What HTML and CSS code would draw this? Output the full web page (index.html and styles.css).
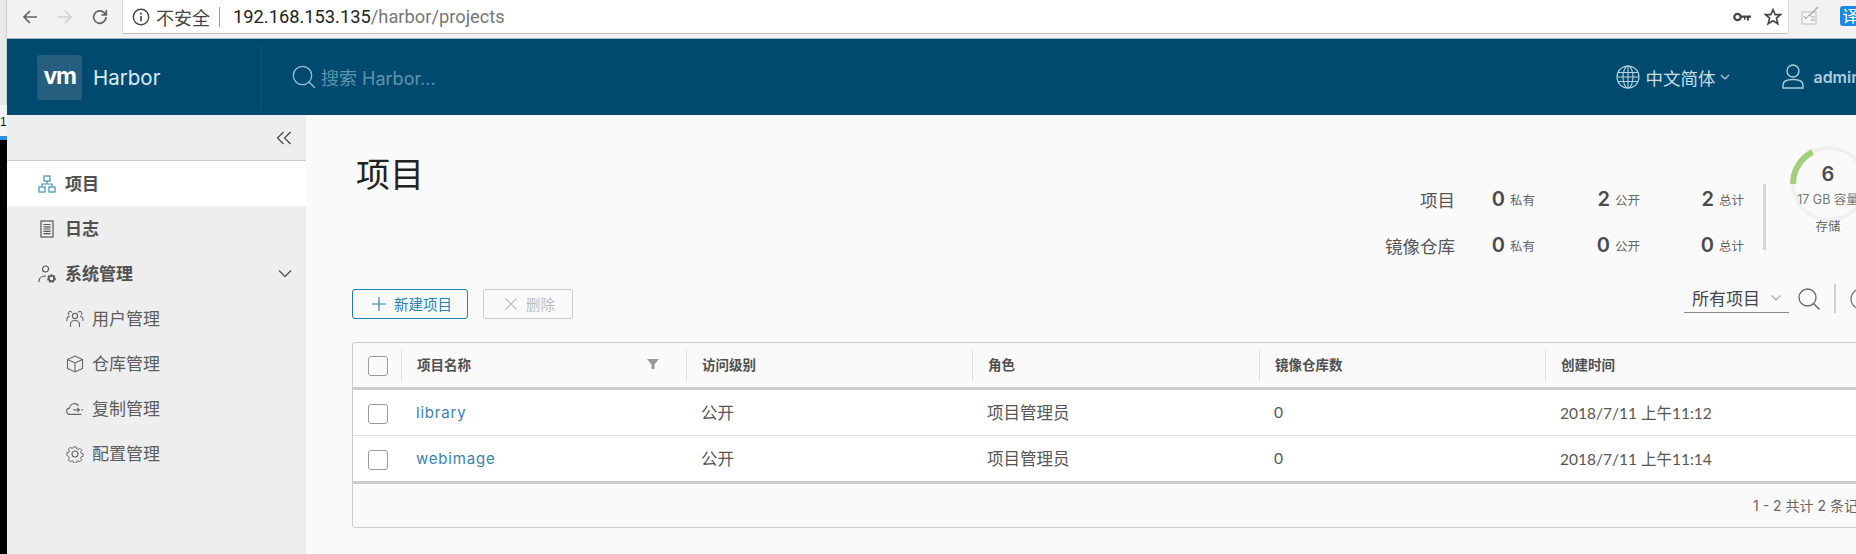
FILE: index.html
```html
<!DOCTYPE html>
<html lang="zh-CN">
<head>
<meta charset="utf-8">
<title>Harbor</title>
<link rel="stylesheet" href="styles.css">
</head>
<body>
<div class="strip">
  <div class="strip-gray"></div>
  <div class="strip-white">1</div>
  <div class="strip-blue"></div>
  <div class="strip-black"></div>
</div>
<div class="window">
  <div class="chrome">
    <div class="nav">
      <svg class="nav-ic" viewBox="0 0 18 18"><path d="M16 9H3M9 3L3 9l6 6" fill="none" stroke="#5f6368" stroke-width="1.7"/></svg>
      <svg class="nav-ic" viewBox="0 0 18 18"><path d="M2 9h13M9 3l6 6-6 6" fill="none" stroke="#cfcfcf" stroke-width="1.7"/></svg>
      <svg class="nav-ic" viewBox="0 0 18 18"><path d="M15 9a6.2 6.2 0 1 1-1.9-4.4L15 6.5M15.3 2v4.8h-4.8" fill="none" stroke="#5f6368" stroke-width="1.7"/></svg>
    </div>
    <div class="omnibox">
      <svg class="info-ic" viewBox="0 0 18 18"><circle cx="9" cy="9" r="7.7" fill="none" stroke="#444" stroke-width="1.4"/><path d="M9 8v5.2M9 4.6v1.8" stroke="#444" stroke-width="1.6"/></svg>
      <span class="insecure">不安全</span>
      <span class="omni-sep"></span>
      <span class="url"><span class="url-host">192.168.153.135</span>/harbor/projects</span>
      <svg class="key-ic" viewBox="0 0 18 10"><circle cx="4.5" cy="5" r="3.2" fill="none" stroke="#444" stroke-width="2.2"/><path d="M8 3.6h10v2.2h-2v2.6h-2V5.8h-1.5v2H11V5.8H8z" fill="#444"/></svg>
      <svg class="star-ic" viewBox="0 0 18 18"><path d="M9 1.6l2.2 5h5.4l-4.2 3.5 1.5 5.6L9 12.7l-4.9 3 1.5-5.6L1.4 6.6h5.4z" fill="none" stroke="#444" stroke-width="1.6"/></svg>
    </div>
    <svg class="ext-ic" viewBox="0 0 19 19"><rect x="1" y="6" width="14" height="12" fill="#f6f6f6" stroke="#bdbdbd"/><path d="M3 10l2 3 3-4M10 11h4M10 14h4" fill="none" stroke="#9a9a9a"/><path d="M8 10l9-9" stroke="#a8a8a8" stroke-width="1.5"/></svg>
    <span class="ext-badge">译</span>
  </div>

  <header class="topbar">
    <div class="brand">
      <span class="logo">vm</span>
      <span class="brand-name">Harbor</span>
    </div>
    <div class="global-search">
      <svg class="search-ic" viewBox="0 0 24 24"><circle cx="10.5" cy="10.5" r="9.2" fill="none" stroke="#9cc0d3" stroke-width="1.3"/><path d="M17 17l6 6" stroke="#9cc0d3" stroke-width="1.3"/></svg>
      <span class="search-ph">搜索 Harbor...</span>
    </div>
    <div class="lang">
      <svg class="globe-ic" viewBox="0 0 24 24"><g fill="none" stroke="#b9d4e2" stroke-width="1.1"><circle cx="12" cy="12" r="11"/><ellipse cx="12" cy="12" rx="5" ry="11"/><path d="M12 1v22M2 7.5h20M1 12h22M2 16.5h20"/></g></svg>
      <span>中文简体</span>
      <svg class="lang-chev" viewBox="0 0 12 8"><path d="M2 2l4 4 4-4" fill="none" stroke="#b9d4e2" stroke-width="1.1"/></svg>
    </div>
    <div class="user">
      <svg class="user-ic" viewBox="0 0 22 26"><g fill="none" stroke="#a9cfe0" stroke-width="1.4"><circle cx="11" cy="7" r="6"/><path d="M1 24v-3c0-3.5 4-5.5 10-5.5s10 2 10 5.5v3z"/></g></svg>
      <span>admin</span>
    </div>
  </header>

  <div class="layout">
    <nav class="sidebar">
      <div class="collapse">
        <svg class="collapse-ic" viewBox="0 0 16 14"><path d="M7.5 1L1.5 7l6 6M14.5 1l-6 6 6 6" fill="none" stroke="#444" stroke-width="1.2"/></svg>
      </div>
      <a class="item active">
        <svg class="item-ic" viewBox="0 0 18 18"><g fill="none" stroke="#3f90bc" stroke-width="1.2"><rect x="6" y="1" width="6" height="5"/><rect x="1" y="12" width="6" height="5"/><rect x="11" y="12" width="6" height="5"/><path d="M9 6v3M4 12V9h10v3"/></g></svg>
        <span>项目</span>
      </a>
      <a class="item">
        <svg class="item-ic" viewBox="0 0 18 18"><g fill="none" stroke="#555" stroke-width="1.2"><rect x="3" y="1" width="12" height="16"/><path d="M5.5 4.5h7M5.5 6.8h7M5.5 9h7M5.5 11.3h7M5.5 13.6h7"/></g></svg>
        <span>日志</span>
      </a>
      <a class="item">
        <svg class="item-ic" viewBox="0 0 18 18"><g fill="none" stroke="#555" stroke-width="1.2"><circle cx="7.5" cy="4" r="3"/><path d="M1 17v-1c0-3 3-5 7-5"/></g><circle cx="13.5" cy="13.5" r="3.2" fill="none" stroke="#555" stroke-width="2.2" stroke-dasharray="1.8 0.9"/><circle cx="13.5" cy="13.5" r="2.6" fill="none" stroke="#555" stroke-width="1.4"/></svg>
        <span>系统管理</span>
        <svg class="item-chev" viewBox="0 0 14 9"><path d="M1 1.5l6 6 6-6" fill="none" stroke="#555" stroke-width="1.3"/></svg>
      </a>
      <a class="item sub">
        <svg class="item-ic" viewBox="0 0 18 18"><g fill="none" stroke="#666" stroke-width="1.1"><circle cx="9" cy="6" r="2.6"/><path d="M4.5 17v-3c0-2 2-3.5 4.5-3.5s4.5 1.5 4.5 3.5v3M1 11V9c0-1.500 1-2.500 3-2.800M17 11V9c0-1.500-1-2.500-3-2.800M3 5a2 2 0 1 1 3-2.500M15 5a2 2 0 1 0-3-2.500"/></g></svg>
        <span>用户管理</span>
      </a>
      <a class="item sub">
        <svg class="item-ic" viewBox="0 0 18 18"><g fill="none" stroke="#666" stroke-width="1.1"><path d="M9 1l7.500 3.500v9L9 17l-7.500-3.500v-9z"/><path d="M1.500 4.500L9 8l7.500-3.500M9 8v9"/></g></svg>
        <span>仓库管理</span>
      </a>
      <a class="item sub">
        <svg class="item-ic" viewBox="0 0 20 18"><g fill="none" stroke="#666" stroke-width="1.2"><path d="M17 15H4.500a3.500 3.500 0 0 1-.5-7A5.500 5.500 0 0 1 14 5.500"/><path d="M8 10h7M12.500 7.800L15 10l-2.500 2.200"/><path d="M18 9v2"/></g></svg>
        <span>复制管理</span>
      </a>
      <a class="item sub">
        <svg class="item-ic" viewBox="0 0 18 18"><g fill="none" stroke="#666" stroke-width="1.1"><circle cx="9" cy="9" r="3"/><path d="M7.600 1h2.800l.5 2.300 1.500.7 2-1.200 2 2-1.200 2 .7 1.500 2.100.5v2.800l-2.100.5-.7 1.500 1.200 2-2 2-2-1.200-1.500.7-.5 2.100H7.600l-.5-2.100-1.500-.7-2 1.200-2-2 1.200-2-.7-1.500L0 10.400V7.600l2.100-.5.7-1.500-1.200-2 2-2 2 1.200 1.500-.7z" transform="translate(0.900 0.900) scale(0.9)"/></g></svg>
        <span>配置管理</span>
      </a>
    </nav>

    <main class="main">
      <div class="title-row">
        <h1 class="title">项目</h1>
        <div class="summary">
          <div class="stats">
            <span class="stat-label">项目</span>
            <span class="stat"><b>0</b><small>私有</small></span>
            <span class="stat"><b>2</b><small>公开</small></span>
            <span class="stat"><b>2</b><small>总计</small></span>
            <span class="stat-label">镜像仓库</span>
            <span class="stat"><b>0</b><small>私有</small></span>
            <span class="stat"><b>0</b><small>公开</small></span>
            <span class="stat"><b>0</b><small>总计</small></span>
          </div>
          <div class="summary-sep"></div>
          <div class="gauge">
            <svg class="gauge-ring" viewBox="0 0 90 90"><circle cx="39" cy="39" r="36" fill="none" stroke="#f0f0f0" stroke-width="4"/><path d="M3 39A36 36 0 0 1 22.500 7" fill="none" stroke="#a3cf7a" stroke-width="6"/></svg>
            <div class="gauge-num">6</div>
            <div class="gauge-cap">17 GB 容量</div>
            <div class="gauge-name">存储</div>
          </div>
        </div>
      </div>

      <div class="toolbar">
        <button class="btn primary">
          <svg class="btn-ic" viewBox="0 0 14 14"><path d="M7 0v14M0 7h14" stroke="#2d7fae" stroke-width="1.2"/></svg>
          <span>新建项目</span>
        </button>
        <button class="btn disabled">
          <svg class="btn-ic small" viewBox="0 0 12 12"><path d="M.5.5l11 11M11.500.5l-11 11" stroke="#bdbdbd" stroke-width="1.2"/></svg>
          <span>删除</span>
        </button>
        <div class="tools">
          <div class="select">
            <span>所有项目</span>
            <svg class="select-chev" viewBox="0 0 12 8"><path d="M1.500 1.500L6 6l4.500-4.500" fill="none" stroke="#aaa" stroke-width="1.2"/></svg>
          </div>
          <svg class="tool-search" viewBox="0 0 22 22"><circle cx="9.500" cy="9.500" r="8.500" fill="none" stroke="#666" stroke-width="1.300"/><path d="M15.500 15.500l6 6" stroke="#666" stroke-width="1.500"/></svg>
          <span class="tool-sep"></span>
          <svg class="tool-refresh" viewBox="0 0 22 22"><circle cx="11" cy="11" r="10" fill="none" stroke="#777" stroke-width="1.300"/></svg>
        </div>
      </div>

      <div class="table">
        <div class="row head">
          <div class="cell check"><span class="box"></span></div>
          <div class="cell"><span class="th name-th">项目名称<svg class="filter-ic" viewBox="0 0 12 12"><path d="M0 1h12L7.500 6.500V11h-3V6.500z" fill="#9a9a9a"/></svg></span></div>
          <div class="cell"><span class="th">访问级别</span></div>
          <div class="cell"><span class="th">角色</span></div>
          <div class="cell"><span class="th">镜像仓库数</span></div>
          <div class="cell"><span class="th">创建时间</span></div>
        </div>
        <div class="row body-row">
          <div class="cell check"><span class="box"></span></div>
          <div class="cell"><a class="link">library</a></div>
          <div class="cell">公开</div>
          <div class="cell">项目管理员</div>
          <div class="cell num">0</div>
          <div class="cell num">2018/7/11 上午11:12</div>
        </div>
        <div class="row body-row last">
          <div class="cell check"><span class="box"></span></div>
          <div class="cell"><a class="link">webimage</a></div>
          <div class="cell">公开</div>
          <div class="cell">项目管理员</div>
          <div class="cell num">0</div>
          <div class="cell num">2018/7/11 上午11:14</div>
        </div>
        <div class="table-foot">1 - 2 共计 2 条记录</div>
      </div>
    </main>
  </div>
</div>
</body>
</html>
```
FILE: styles.css
```css
* { box-sizing: border-box; }
html, body { margin: 0; height: 554px; overflow: hidden; }
body {
  display: flex;
  width: 1856px;
  font-family: "Inter", "Noto Sans CJK SC", sans-serif;
  color: #565656;
  background: #fafafa;
}
svg { display: block; flex: none; }

/* left desktop sliver */
.strip { flex: none; width: 7px; display: flex; flex-direction: column; background: #000; }
.strip-gray { height: 105px; background: #e9e9e9; border-right: 1px solid #cfcfcf; }
.strip-white { height: 31px; background: #f4f4f4; font: 12px/34px "Liberation Sans", sans-serif; color: #222; overflow: hidden; }
.strip-blue { height: 4px; background: #2f8fe0; }
.strip-black { flex: 1; background: #000; }

/* window is wider than the photographed area */
.window { flex: none; width: 1873px; display: flex; flex-direction: column; height: 554px; }

/* browser chrome */
.chrome { height: 39px; flex: none; display: flex; align-items: flex-start; background: #f2f2f2; border-bottom: 1px solid #9fb8c6; }
.nav { width: 115px; flex: none; height: 33px; display: flex; align-items: center; gap: 17px; padding-left: 14px; }
.nav-ic { width: 18px; height: 18px; }
.omnibox {
  width: 1667px; height: 34px; flex: none; display: flex; align-items: center;
  background: #fff; border: 1px solid #ddd; border-top: 0; border-bottom-color: #c9c0c0; border-radius: 0 0 3px 0;
  padding-left: 9px;
}
.info-ic { width: 18px; height: 18px; }
.insecure { margin-left: 6px; font-size: 18px; color: #444; }
.omni-sep { width: 1px; height: 20px; background: #999; margin-left: 9px; }
.url { margin-left: 13px; font: 18.300px "Roboto", sans-serif; color: #777; }
.url-host { color: #222; }
.key-ic { width: 18px; height: 10px; margin-left: auto; }
.star-ic { width: 18px; height: 18px; margin: 0 6px 0 13px; }
.ext-ic { width: 19px; height: 19px; margin: 6px 0 0 12px; }
.ext-badge {
  margin: 6px 0 0 20px; width: 21px; height: 20px; border-radius: 3px; background: #1e88e5; color: #fff;
  font-size: 16px; line-height: 20px; text-align: center; flex: none;
}

/* app header */
.topbar { height: 76px; flex: none; display: flex; align-items: center; background: #004a70; color: #c9dfea; }
.brand { width: 255px; height: 66px; flex: none; display: flex; align-items: center; padding-left: 30px; border-right: 1px solid #0d5478; }
.logo {
  width: 45px; height: 45px; flex: none; border-radius: 3px; background: #255e7f; color: #fff;
  font-size: 23px; font-weight: 700; letter-spacing: -1.5px; line-height: 42px; text-align: center;
}
.brand-name { margin-left: 11px; font-size: 20.500px; color: #d9eef8; }
.global-search { display: flex; align-items: center; margin-left: 30px; }
.search-ic { width: 24px; height: 24px; }
.search-ph { margin-left: 5px; font-size: 18px; color: #5f93ad; }
.lang { margin-left: auto; display: flex; align-items: center; font-size: 17.500px; }
.globe-ic { width: 24px; height: 24px; margin-right: 5px; }
.lang-chev { width: 12px; height: 8px; margin-left: 4px; }
.user { display: flex; align-items: center; margin: 0 19px 0 51px; font-size: 16px; font-weight: 600; color: #a9cfe0; }
.user-ic { width: 22px; height: 26px; margin-right: 9px; }

/* layout */
.layout { flex: 1; display: flex; min-height: 0; }
.sidebar { width: 299px; flex: none; background: #eee; font-size: 17px; }
.collapse { height: 46px; display: flex; align-items: center; justify-content: flex-end; padding: 0 14px 0 0; border-bottom: 1px solid #ccc; }
.collapse-ic { width: 16px; height: 14px; }
.item { height: 45px; display: flex; align-items: center; padding-left: 31px; font-weight: 700; color: #505050; }
.item span { padding-bottom: 2px; }
.item.active { background: #fff; }
.item-ic { width: 18px; height: 18px; margin-right: 9px; }
.item-chev { width: 14px; height: 9px; margin-left: auto; margin-right: 14px; }
.item.sub { padding-left: 59px; font-weight: 400; color: #5c5c5c; }
.item.sub .item-ic { margin-right: 8px; }

.main { flex: 1; min-width: 0; padding-left: 46px; background: #fafafa; }
.title-row { height: 169px; display: flex; align-items: flex-start; }
.title { margin: 39px 0 0 4px; font-size: 34px; line-height: 42px; font-weight: 400; color: #222; }
.summary { margin-left: auto; display: flex; align-items: flex-start; padding-top: 30px; }
.stats { display: grid; grid-template-columns: auto 80px 105px 104px; grid-auto-rows: 46px; margin-top: 31px; align-items: center; }
.stat-label { font-size: 17.500px; text-align: right; color: #565656; }
.stat { display: flex; align-items: center; justify-content: flex-end; gap: 5px; }
.stat b { font-size: 20px; font-weight: 600; color: #4a4a4a; }
.stat small { font-size: 12.500px; color: #666; }
.summary-sep { width: 3px; height: 66px; margin: 39px 0 0 19px; background: #d6d6d6; }
.gauge { position: relative; width: 90px; margin-left: 24px; text-align: center; padding-right: 14px; }
.gauge-ring { position: absolute; top: 0; left: 0; width: 90px; height: 90px; }
.gauge-num { padding-top: 17px; font-size: 20px; line-height: 24px; font-weight: 600; color: #4a4a4a; position: relative; }
.gauge-cap { margin-top: 4px; font-size: 12.500px; line-height: 20px; white-space: nowrap; color: #777; position: relative; }
.gauge-name { margin-top: 7px; font-size: 12.500px; line-height: 20px; color: #666; position: relative; }

.toolbar { height: 58px; display: flex; align-items: flex-start; }
.btn {
  height: 30px; margin-top: 5px; display: flex; align-items: center; padding: 0; border-radius: 3px;
  background: transparent; font: inherit; font-size: 14.500px;
}
.btn span { padding-bottom: 2px; }
.btn.primary { width: 116px; padding-left: 19px; border: 1px solid #1f7fb0; color: #2d7fae; }
.btn.disabled { width: 90px; padding-left: 21px; margin-left: 15px; border: 1px solid #ccc; color: #bdbdbd; }
.btn-ic { width: 14px; height: 14px; margin-right: 8px; }
.btn-ic.small { width: 12px; height: 12px; margin-right: 9px; }
.tools { margin-left: auto; display: flex; align-items: flex-start; }
.select { width: 105px; height: 29px; display: flex; align-items: center; padding-left: 8px; font-size: 17px; color: #444; border-bottom: 1px solid #8c8c8c; }
.select span { padding-bottom: 2px; }
.select-chev { width: 12px; height: 8px; margin-left: 10px; }
.tool-search { width: 22px; height: 22px; margin: 4px 0 0 9px; }
.tool-sep { width: 2px; height: 29px; margin-left: 14px; background: #d0d0d0; }
.tool-refresh { width: 22px; height: 22px; margin: 4px 8px 0 14px; }

/* table */
.table { border: 1px solid #ccc; border-radius: 3px; background: #fafafa; }
.row { display: grid; grid-template-columns: 48px 285px 286px 287px 286px 1fr; align-items: center; }
.head { height: 47px; border-bottom: 3px solid #ccc; }
.body-row { height: 46px; background: #fff; border-bottom: 1px solid #ddd; font-size: 16.500px; }
.body-row.last { height: 48px; border-bottom: 3px solid #ccc; }
.cell { padding: 0 0 2px 15px; white-space: nowrap; }
.check { padding: 2px 0 0 15px; }
.box { display: block; width: 20px; height: 20px; border: 1px solid #9a9a9a; border-radius: 3px; background: #fff; }
.head .box { background: transparent; }
.th { display: flex; align-items: center; height: 33px; margin: 2px 0 0 -15px; padding: 0 0 2px 15px; border-left: 1px solid #e2e2e2; font-size: 13.500px; font-weight: 700; color: #505050; }
.filter-ic { width: 12px; height: 12px; margin-left: auto; margin-right: 27px; }
.link { color: #3b81ad; font-size: 15px; letter-spacing: .8px; }
.num { font-size: 15.500px; font-family: "Lato", "Noto Sans CJK SC", sans-serif; }
.table-foot { height: 43px; padding: 0 7px 2px 0; display: flex; align-items: center; justify-content: flex-end; font-size: 14px; color: #666; }
```
